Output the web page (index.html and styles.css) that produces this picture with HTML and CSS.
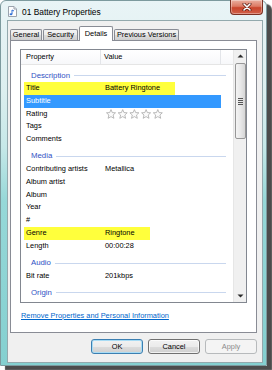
FILE: index.html
```html
<!DOCTYPE html>
<html lang="en">
<head>
    <meta charset="UTF-8">
    <meta name="viewport" content="width=device-width, initial-scale=1.0">
    <title>01 Battery Properties</title>
    <link rel="stylesheet" href="styles.css">
</head>
<body>
  <div class="window">
    <!-- Title bar -->
    <div class="titlebar">
      <svg class="file-icon" width="9" height="11" viewBox="0 0 9 11">
        <path d="M0.5 0.5 H6 L8.5 3 V10.5 H0.5 Z" fill="#fdfdfd" stroke="#9aa3ad"/>
        <path d="M6 0.5 V3 H8.5" fill="#e6e9ee" stroke="#9aa3ad"/>
        <path d="M4 4 V8" stroke="#2f6fd6" stroke-width="1"/>
        <path d="M4 4 L6 5" stroke="#2f6fd6" stroke-width="1"/>
        <ellipse cx="3" cy="8.2" rx="1.4" ry="1" fill="#2f6fd6"/>
      </svg>
      <span class="title-text">01 Battery Properties</span>
      <div class="close-btn">
        <svg width="10" height="8" viewBox="0 0 10 8">
          <path d="M2 1 L8 7 M8 1 L2 7" stroke="#5a1a10" stroke-width="3" stroke-linecap="round"/>
          <path d="M2 1 L8 7 M8 1 L2 7" stroke="#ffffff" stroke-width="1.6" stroke-linecap="round"/>
        </svg>
      </div>
    </div>

    <div class="client">
      <div class="tabs">
        <div class="tab tab-general">General</div>
        <div class="tab tab-security">Security</div>
        <div class="tab tab-details active">Details</div>
        <div class="tab tab-previous">Previous Versions</div>
      </div>

      <div class="panel">
        <div class="listbox">
          <div class="list-main">
            <div class="list-header">
              <div class="col-head col-prop">Property</div>
              <div class="col-head col-value">Value</div>
              <div class="col-head col-fill"></div>
            </div>

            <div class="group"><span>Description</span><i></i></div>
            <div class="row mark mark-title"><span>Title</span><span>Battery Ringtone</span></div>
            <div class="row selected"><span>Subtitle</span><span></span></div>
            <div class="row">
              <span>Rating</span>
              <span class="stars">
                <svg width="58" height="10" viewBox="0 0 58 10">
                  <g fill="#fbfbfb" stroke="#a9a9a9" stroke-width="0.8" stroke-linejoin="round">
                    <polygon points="5,0.6 6.3,3.6 9.5,3.8 7.1,6 7.9,9.3 5,7.6 2.1,9.3 2.9,6 0.5,3.8 3.7,3.6"/>
                    <polygon transform="translate(11.7 0)" points="5,0.6 6.3,3.6 9.5,3.8 7.1,6 7.9,9.3 5,7.6 2.1,9.3 2.9,6 0.5,3.8 3.7,3.6"/>
                    <polygon transform="translate(23.4 0)" points="5,0.6 6.3,3.6 9.5,3.8 7.1,6 7.9,9.3 5,7.6 2.1,9.3 2.9,6 0.5,3.8 3.7,3.6"/>
                    <polygon transform="translate(35.1 0)" points="5,0.6 6.3,3.6 9.5,3.8 7.1,6 7.9,9.3 5,7.6 2.1,9.3 2.9,6 0.5,3.8 3.7,3.6"/>
                    <polygon transform="translate(46.8 0)" points="5,0.6 6.3,3.6 9.5,3.8 7.1,6 7.9,9.3 5,7.6 2.1,9.3 2.9,6 0.5,3.8 3.7,3.6"/>
                  </g>
                </svg>
              </span>
            </div>
            <div class="row"><span>Tags</span><span></span></div>
            <div class="row"><span>Comments</span><span></span></div>

            <div class="group"><span>Media</span><i></i></div>
            <div class="row"><span>Contributing artists</span><span>Metallica</span></div>
            <div class="row"><span>Album artist</span><span></span></div>
            <div class="row"><span>Album</span><span></span></div>
            <div class="row"><span>Year</span><span></span></div>
            <div class="row"><span>#</span><span></span></div>
            <div class="row mark mark-genre"><span>Genre</span><span>Ringtone</span></div>
            <div class="row"><span>Length</span><span>00:00:28</span></div>

            <div class="group"><span>Audio</span><i></i></div>
            <div class="row"><span>Bit rate</span><span>201kbps</span></div>

            <div class="group"><span>Origin</span><i></i></div>
          </div>

          <!-- Scrollbar -->
          <div class="scrollbar">
            <svg class="arrow" width="7" height="4" viewBox="0 0 7 4"><path d="M0.5 3.5 L3.5 0.5 L6.5 3.5 Z" fill="#2b2b2b"/></svg>
            <div class="thumb">
              <div class="grip"><i></i><i></i><i></i><i></i></div>
            </div>
            <div class="track"></div>
            <svg class="arrow" width="7" height="4" viewBox="0 0 7 4"><path d="M0.5 0.5 L3.5 3.5 L6.5 0.5 Z" fill="#2b2b2b"/></svg>
          </div>
        </div>

        <a class="remove-link" href="#">Remove Properties and Personal Information</a>
      </div>

      <div class="buttons">
        <button class="btn btn-default">OK</button>
        <button class="btn">Cancel</button>
        <button class="btn" disabled>Apply</button>
      </div>
    </div>
  </div>
</body>
</html>
```

FILE: styles.css
```css
:root {
  --clr-border: #898c95;
  --clr-list-border: #828790;
  --clr-group: #2f52c4;
  --clr-group-line: #c9d7ee;
  --clr-mark: #ffff3c;
  --clr-select: #3399ff;
  --clr-link: #0066cc;
}
* { margin: 0; padding: 0; box-sizing: border-box; }
body {
  font-family: "Liberation Sans", Arial, sans-serif;
  font-size: 7.4px;
  color: #000;
  background: #ffffff;
  width: 272px;
  height: 370px;
  overflow: hidden;
}

/* Aero window frame */
.window {
  width: 267px;
  height: 366px;
  border: 1px solid #7d9a9e;
  border-radius: 6px 6px 0 0;
  background: linear-gradient(180deg, #e9f4f6 0%, #dcefef 25%, #c6e8e8 40%, #96d8d8 55%, #84d0d0 100%);
  box-shadow: 5px 4px 1px #4c4c4c;
  display: flex;
  flex-direction: column;
}
.titlebar {
  height: 19px;
  display: flex;
  align-items: center;
  padding-left: 7px;
  position: relative;
}
.file-icon { margin-top: 2px; }
.title-text {
  font-size: 8.4px;
  margin-left: 5px;
  margin-top: 2px;
}
.close-btn {
  position: absolute;
  top: -1px;
  right: 3px;
  width: 33px;
  height: 15px;
  border: 1px solid #7b3022;
  border-top: none;
  border-radius: 0 0 4px 4px;
  background: linear-gradient(180deg, #eab0a0 0%, #dc7a64 45%, #c9452c 55%, #d0614a 100%);
  display: flex;
  align-items: center;
  justify-content: center;
  box-shadow: inset 0 0 0 1px rgba(255,255,255,0.35);
}

/* Client area */
.client {
  flex: 1;
  margin: 0 3px 2px 6px;
  border: 1px solid #93a9ad;
  background: #f0f0f0;
  display: flex;
  flex-direction: column;
}
.tabs {
  display: flex;
  align-items: flex-end;
  gap: 1px;
  height: 14px;
  margin: 5px 0 0 2px;
}
.tab {
  height: 11px;
  line-height: 10px;
  text-align: center;
  border: 1px solid var(--clr-border);
  border-bottom: none;
  border-radius: 2px 2px 0 0;
  background: linear-gradient(180deg, #f3f3f3 0%, #ebebeb 50%, #dddddd 51%, #cfcfcf 100%);
}
.tab-general { width: 32px; }
.tab-security { width: 35px; }
.tab-details { width: 34px; }
.tab-previous { width: 65px; }
.tab.active {
  height: 15px;
  line-height: 13px;
  margin-bottom: -1px;
  background: #ffffff;
  position: relative;
  z-index: 1;
}

.panel {
  width: 247px;
  height: 293px;
  margin-left: 2px;
  border: 1px solid var(--clr-border);
  background: #ffffff;
  padding: 8px 9px 0 9px;
  display: flex;
  flex-direction: column;
}

/* Property list */
.listbox {
  height: 254px;
  border: 1px solid var(--clr-list-border);
  display: flex;
}
.list-main {
  flex: 1;
  display: flex;
  flex-direction: column;
}
.list-header {
  height: 15px;
  display: flex;
  background: linear-gradient(180deg, #ffffff 0%, #f7f8fa 100%);
  border-bottom: 1px solid #e5e5e5;
}
.col-head {
  border-right: 1px solid #e3e5e9;
  line-height: 14px;
  padding-left: 5px;
}
.col-prop { width: 80px; }
.col-value { width: 120px; padding-left: 3px; }
.col-fill { flex: 1; border-right: none; }

.group {
  height: 17px;
  padding: 3px 7px 0 10px;
  display: flex;
  align-items: center;
  gap: 4px;
  color: var(--clr-group);
  font-size: 7.8px;
}
.group i {
  flex: 1;
  height: 1px;
  background: var(--clr-group-line);
  margin-top: 1px;
}
.row {
  height: 12.8px;
  line-height: 12.8px;
  margin-left: 3px;
  padding-left: 2px;
  display: grid;
  grid-template-columns: 79px 1fr;
  white-space: nowrap;
}
.row.mark { background: var(--clr-mark); }
.mark-title { width: 151px; }
.mark-genre { width: 126px; }
.row.selected {
  width: 197px;
  background: var(--clr-select);
  color: #ffffff;
}
.stars {
  display: flex;
  align-items: center;
  padding-left: 1px;
}

/* Scrollbar */
.scrollbar {
  width: 13px;
  background: #f0f0f0;
  border-left: 1px solid #e6e6e6;
  display: flex;
  flex-direction: column;
  align-items: center;
  padding: 4px 0 4px;
}
.scrollbar .arrow { flex: none; }
.thumb {
  width: 11px;
  height: 76px;
  margin-top: 5px;
  border: 1px solid #979797;
  border-radius: 2px;
  background: linear-gradient(90deg, #f4f4f4 0%, #e8e8e8 50%, #d6d6d6 100%);
  display: flex;
  align-items: center;
  justify-content: center;
}
.grip {
  display: flex;
  flex-direction: column;
  gap: 1px;
}
.grip i {
  width: 5px;
  height: 1px;
  background: #555;
}
.track { flex: 1; }

.remove-link {
  margin-top: 8px;
  color: var(--clr-link);
  text-decoration: underline;
  align-self: flex-start;
  margin-left: 1px;
}

/* Dialog buttons */
.buttons {
  display: flex;
  justify-content: flex-end;
  gap: 5px;
  margin: 6px 5px 0 0;
}
.btn {
  width: 52px;
  height: 15px;
  font-family: inherit;
  font-size: 7.4px;
  color: #000;
  border: 1px solid #707070;
  border-radius: 3px;
  background: linear-gradient(180deg, #f2f2f2 0%, #ebebeb 50%, #dddddd 51%, #cfcfcf 100%);
  box-shadow: inset 0 0 0 1px rgba(255,255,255,0.7);
}
.btn-default {
  border-color: #3c7fb1;
  box-shadow: inset 0 0 0 1px #a8dcf5;
}
.btn:disabled {
  color: #8b8b8b;
  border-color: #b7babc;
  background: #f4f4f4;
  box-shadow: none;
}
```
